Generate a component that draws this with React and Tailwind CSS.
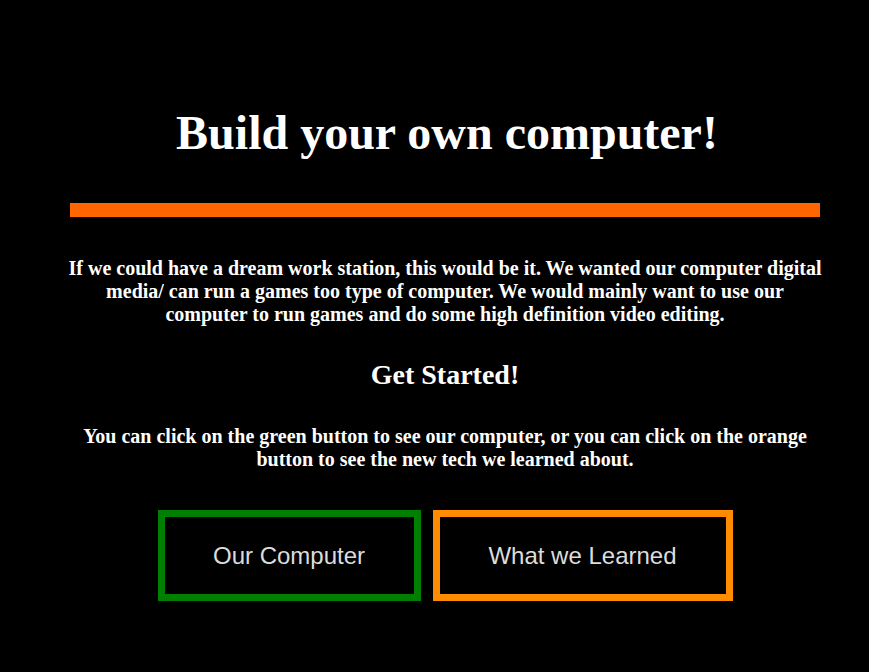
export default function App() {
  return (
    <div className="min-h-[672px] bg-black text-white">
      <div className="ml-[70px] w-[750px] pt-[105px] text-center">
        {/* Header */}
        <h1 className="pl-[4px] font-['Liberation_Serif',serif] text-[48px] font-bold leading-[55px]">
          Build your own computer!
        </h1>
        <div className="mt-[43px] h-[14px] w-full bg-[#ff6600]" />

        {/* Intro */}
        <p className="-mx-[8px] mt-[40px] font-['Liberation_Serif',serif] text-[20px] font-bold leading-[23px]">
          If we could have a dream work station, this would be it. We wanted our computer digital
          media/ can run a games too type of computer. We would mainly want to use our
          <br />
          computer to run games and do some high definition video editing.
        </p>

        <h2 className="mt-[33px] font-['Liberation_Serif',serif] text-[28px] font-bold leading-[32px]">
          Get Started!
        </h2>

        <p className="mx-auto mt-[34px] w-[740px] font-['Liberation_Serif',serif] text-[20px] font-bold leading-[23px]">
          You can click on the green button to see our computer, or you can click on the orange
          button to see the new tech we learned about.
        </p>

        {/* Buttons */}
        <div className="mt-[39px] flex justify-center gap-[12px]">
          <button className="flex h-[91px] w-[263px] items-center justify-center border-[7px] border-[#008000] bg-black font-['Liberation_Sans',Arial,sans-serif] text-[24px] text-[#dcdcdc]">
            Our Computer
          </button>
          <button className="flex h-[91px] w-[300px] items-center justify-center border-[7px] border-[#ff8c00] bg-black font-['Liberation_Sans',Arial,sans-serif] text-[24px] text-[#dcdcdc]">
            What we Learned
          </button>
        </div>
      </div>
    </div>
  );
}
